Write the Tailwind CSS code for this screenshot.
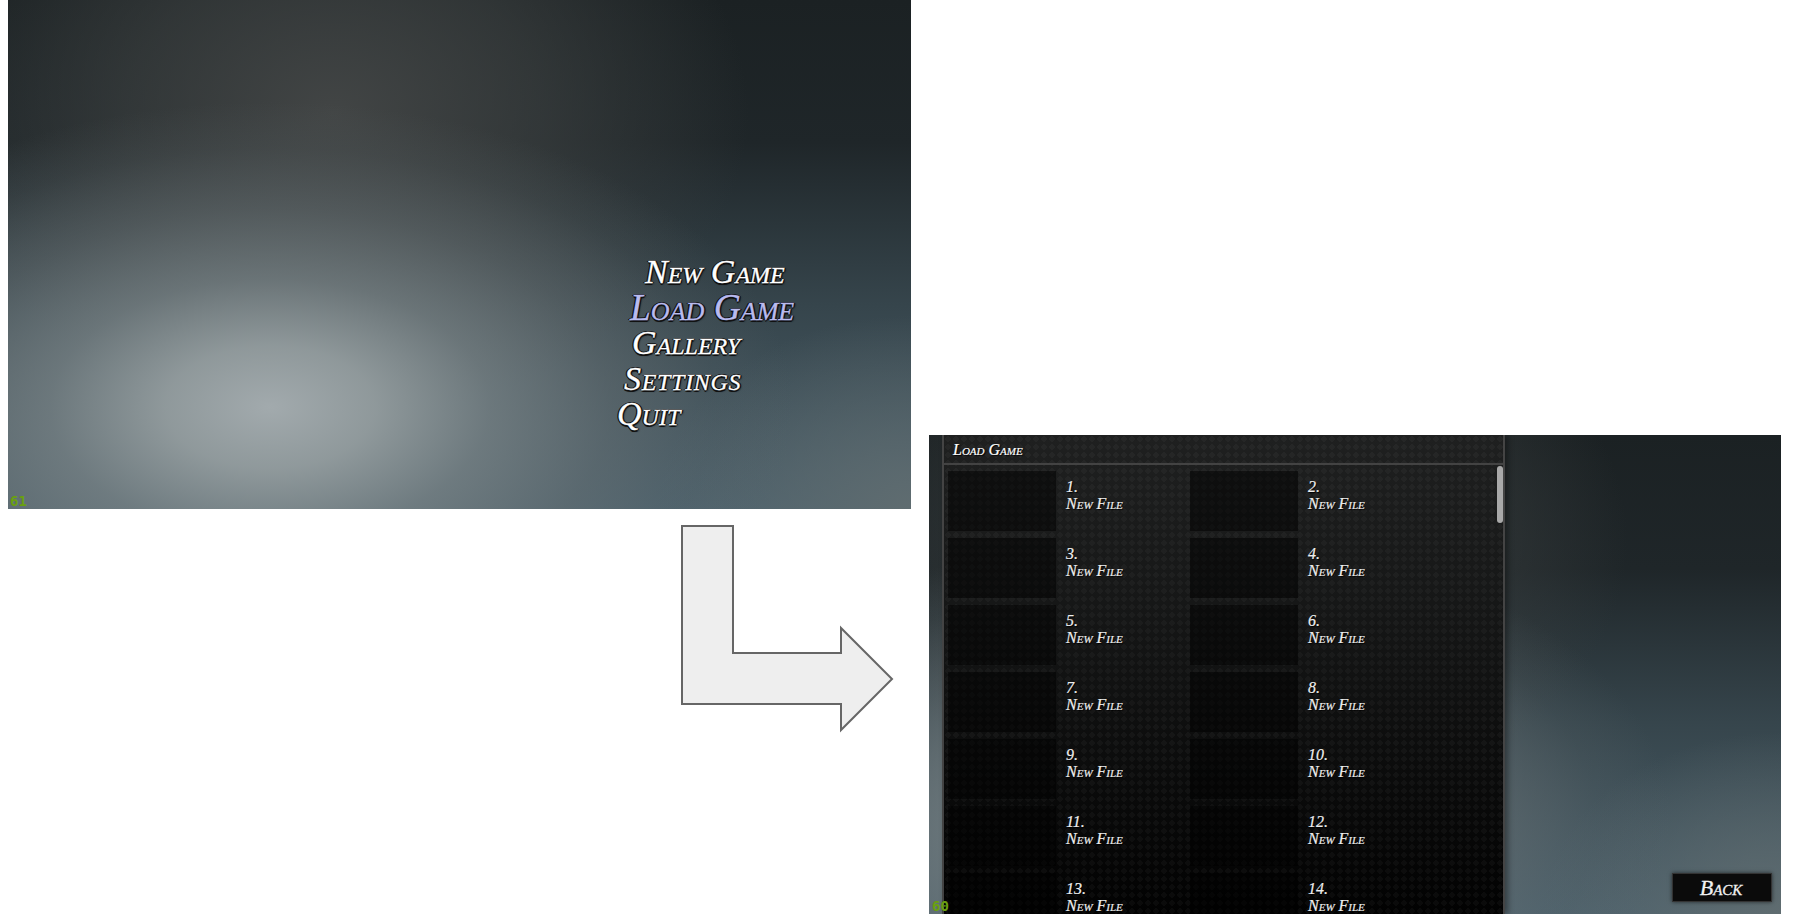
<!DOCTYPE html>
<html lang="en">
<head>
  <meta charset="UTF-8">
  <meta name="viewport" content="width=device-width, initial-scale=1.0">
  <title>Load Game</title>
  <script src="https://cdn.jsdelivr.net/npm/@tailwindcss/browser@4"></script>
</head>
<body class="bg-white overflow-hidden font-['Liberation_Serif',serif]">
  <div class="grid grid-cols-[8px_903px_18px_852px] grid-rows-[435px_74px_405px] w-[1793px] h-[920px]">

    <!-- main menu -->
    <section class="col-start-2 row-start-1 row-span-2 relative overflow-hidden pt-[254px] bg-[radial-gradient(ellipse_58%_60%_at_29%_80%,#a2aaadff_0%,#949d9ff0_20%,#7a8487c0_42%,#6a737680_65%,#5f696c30_85%,#5f696c00_100%),radial-gradient(ellipse_46%_60%_at_36%_22%,#424545_0%,#3f434399_50%,#3f434300_100%),radial-gradient(ellipse_28%_38%_at_100%_100%,#5f6c70_0%,#5f6c7000_100%),linear-gradient(180deg,#1b2123_0%,#1f2629_28%,#36454c_60%,#4c616c_100%)]">
      <ul class="flex flex-col italic [font-variant-caps:small-caps] text-[34px] leading-[35.5px] text-white [-webkit-text-stroke:0.3px_#fff] [text-shadow:-1.5px_0_0_#111,1.5px_0_0_#111,0_-1.5px_0_#111,0_1.5px_0_#111,1px_1px_2px_#000]">
        <li class="ml-[637px]">New Game</li>
        <li class="ml-[622px] text-[37.5px] text-[#b9bbef] [-webkit-text-stroke:0.3px_#b9bbef]">Load Game</li>
        <li class="ml-[624px]">Gallery</li>
        <li class="ml-[616px] tracking-[0.7px]">Settings</li>
        <li class="ml-[609px]">Quit</li>
      </ul>
      <span class="absolute left-[2px] bottom-[1px] font-['DejaVu_Sans_Mono',monospace] font-bold text-[14px] leading-[14px] text-[#6aa00f]">61</span>
    </section>

    <!-- arrow between the two screens -->
    <svg class="col-start-2 col-span-2 row-start-3 ml-[673px] mt-[16px]" width="214" height="208" viewBox="0 0 214 208">
      <polygon points="1,1 52,1 52,128 160,128 160,103 211,154 160,205 160,179 1,179" fill="#eeeeee" stroke="#666666" stroke-width="2"/>
    </svg>

    <!-- load game screen -->
    <section class="col-start-4 row-start-2 row-span-2 relative overflow-hidden h-[479px] self-start pl-[13px] bg-[radial-gradient(ellipse_58%_60%_at_29%_80%,#a2aaadff_0%,#949d9ff0_20%,#7a8487c0_42%,#6a737680_65%,#5f696c30_85%,#5f696c00_100%),radial-gradient(ellipse_46%_60%_at_36%_22%,#424545_0%,#3f434399_50%,#3f434300_100%),radial-gradient(ellipse_28%_38%_at_100%_100%,#5f6c70_0%,#5f6c7000_100%),linear-gradient(180deg,#1b2123_0%,#1f2629_28%,#36454c_60%,#4c616c_100%)]">
      <div class="w-[563px] h-full flex flex-col border-x-2 border-[#444] bg-[linear-gradient(180deg,#1f2020_0%,#161717_35%,#020202_100%)] shadow-[3px_0_6px_#0006]">
        <div class="relative flex-1 flex flex-col min-h-0 bg-[radial-gradient(circle,#ffffff08_0%,#ffffff08_45%,#0000_50%)] bg-[length:8px_8px]">
          <h2 class="shrink-0 h-[30px] pl-[9px] pt-[8px] border-b-2 border-[#434343] italic [font-variant-caps:small-caps] text-[16px] leading-[14px] text-white [-webkit-text-stroke:0.2px_#fff] [text-shadow:1px_1px_1px_#000]">Load Game</h2>
          <div id="slots" class="shrink-0 grid grid-cols-[242px_242px] auto-rows-[67px] pl-[4px] pt-[6px] italic text-[16px] leading-[17px] text-[#eeeeee] [-webkit-text-stroke:0.2px_#eee] [text-shadow:1px_1px_1px_#000]"></div>
          <div class="absolute right-0 top-[31px] w-[6px] h-[57px] rounded-[3px] bg-[#a9a9a9]"></div>
        </div>
      </div>
      <button class="absolute right-[9px] bottom-[12px] w-[100px] h-[29px] pr-[2px] bg-[#0b0b0b] border border-[#333] shadow-[0_0_4px_#0009] italic [font-variant-caps:small-caps] text-[22px] leading-[27px] text-[#f2f2f2] [-webkit-text-stroke:0.3px_#f2f2f2]">Back</button>
      <span class="absolute left-[3px] bottom-[1px] font-['DejaVu_Sans_Mono',monospace] font-bold text-[14px] leading-[13px] text-[#6aa00f]">60</span>
    </section>
  </div>

  <script>
    const slots = document.getElementById('slots');
    for (let i = 1; i <= 14; i++) {
      const slot = document.createElement('div');
      slot.className = 'flex gap-[10px]';
      slot.innerHTML = `
        <div class="w-[108px] h-[60px] bg-black/50"></div>
        <div class="pt-[7px]"><p>${i}.</p><p class="[font-variant-caps:small-caps]">New File</p></div>
      `;
      slots.appendChild(slot);
    }
  </script>
</body>
</html>
